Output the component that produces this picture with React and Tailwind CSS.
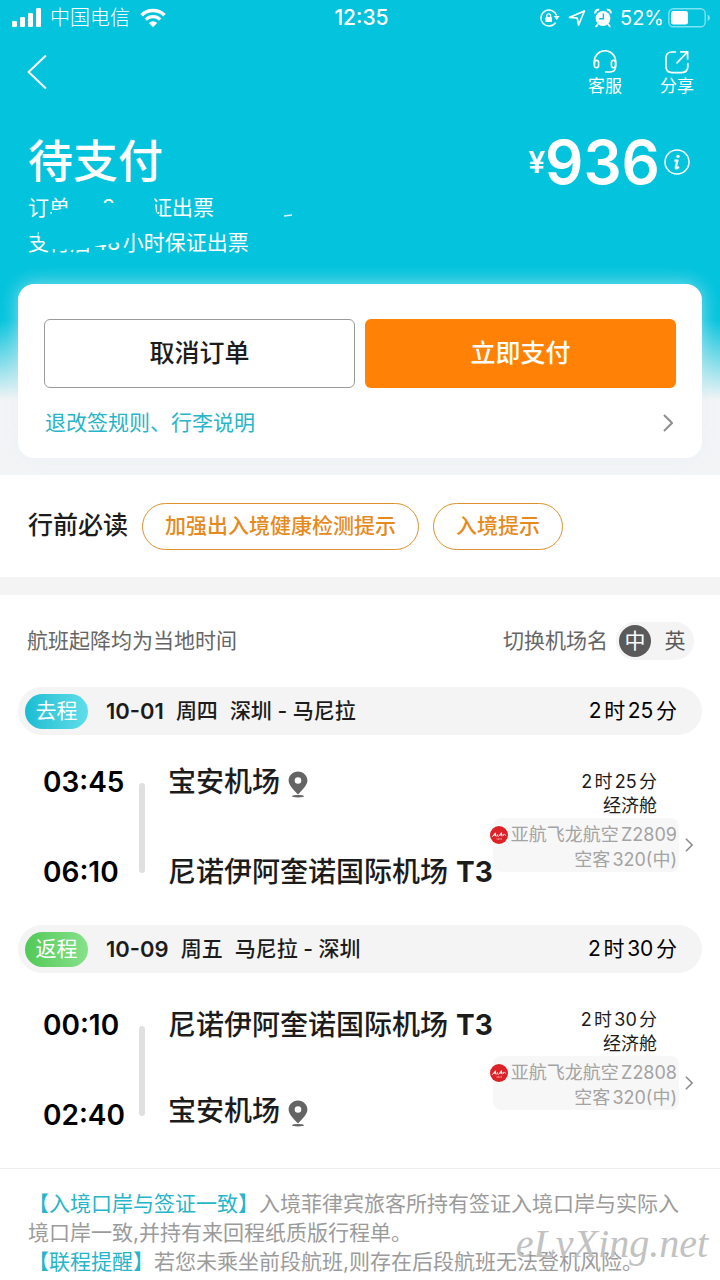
import React, { useState } from 'react';

const NOTICES = [
    {
        label: '【入境口岸与签证一致】',
        text: '入境菲律宾旅客所持有签证入境口岸与实际入境口岸一致,并持有来回程纸质版行程单。',
    },
    {
        label: '【联程提醒】',
        text: '若您未乘坐前段航班,则存在后段航班无法登机风险。',
    },
];

const LEGS = [
    {
        tag: '去程',
        tagClass: 'bg-linear-to-r from-[#14bdd2] to-[#5edde9]',
        date: '10-01',
        day: '周四',
        route: '深圳 - 马尼拉',
        duration: '2时25分',
        departTime: '03:45',
        arriveTime: '06:10',
        from: { name: '宝安机场', pin: true },
        to: { name: '尼诺伊阿奎诺国际机场', terminal: 'T3' },
        flight: 'Z2809',
        bodyClass: 'pt-[31px]',
        stopsClass: 'gap-[58px]',
    },
    {
        tag: '返程',
        tagClass: 'bg-linear-to-r from-[#52c956] to-[#86e18b]',
        date: '10-09',
        day: '周五',
        route: '马尼拉 - 深圳',
        duration: '2时30分',
        departTime: '00:10',
        arriveTime: '02:40',
        from: { name: '尼诺伊阿奎诺国际机场', terminal: 'T3' },
        to: { name: '宝安机场', pin: true },
        flight: 'Z2808',
        bodyClass: 'pt-[36px]',
        stopsClass: 'gap-[54px]',
    },
];

const SignalIcon = () => (
    <svg width="30" height="20" viewBox="0 0 30 20" fill="currentColor">
        <rect x="0" y="13" width="5" height="6" rx="1.2" />
        <rect x="8" y="9" width="5" height="10" rx="1.2" />
        <rect x="16" y="5" width="5" height="14" rx="1.2" />
        <rect x="24" y="0" width="5" height="19" rx="1.2" />
    </svg>
);

const WifiIcon = () => (
    <svg width="26" height="20" viewBox="0 0 26 20" fill="none" stroke="currentColor">
        <path d="M1.5 7.2 A16.5 16.5 0 0 1 24.5 7.2" strokeWidth="3.6" />
        <path d="M5.8 11.6 A10.3 10.3 0 0 1 20.2 11.6" strokeWidth="3.2" />
        <path d="M13 19.2 L8.8 14.9 A6 6 0 0 1 17.2 14.9 Z" fill="currentColor" stroke="none" />
    </svg>
);

const RotationLockIcon = () => (
    <svg width="20" height="20" viewBox="0 0 20 20" fill="none" stroke="currentColor">
        <path d="M15.6 14.6 A8 8 0 1 1 16.6 7.6" strokeWidth="1.5" />
        <path d="M13.8 8 H19.6 L16.7 12 Z" fill="currentColor" stroke="none" />
        <rect x="5.4" y="9" width="6.6" height="5" rx="0.8" fill="currentColor" stroke="none" />
        <path d="M6.8 9.4 V7.8 A1.9 1.9 0 0 1 10.6 7.8 V9.4" strokeWidth="1.3" />
    </svg>
);

const LocationIcon = () => (
    <svg width="18" height="18" viewBox="0 0 18 18" fill="none" stroke="currentColor" strokeWidth="1.7" strokeLinejoin="round">
        <path d="M16.4 2 L10.6 16 L9.2 9 L1.6 8.4 Z" />
    </svg>
);

const AlarmIcon = () => (
    <svg width="18" height="20" viewBox="0 0 18 20" fill="none" stroke="currentColor">
        <circle cx="9" cy="10.5" r="7.4" fill="currentColor" stroke="none" />
        <path d="M1.4 5.4 A3 3 0 0 1 5.2 1.8 M12.8 1.8 A3 3 0 0 1 16.6 5.4" strokeWidth="2" />
        <path d="M3.8 16.2 L2.2 18.4 M14.2 16.2 L15.8 18.4" strokeWidth="1.8" strokeLinecap="round" />
        <path d="M9.4 5.6 V10.8 H5.2" stroke="#03c3dd" strokeWidth="1.4" />
    </svg>
);

const BatteryIcon = () => (
    <svg width="43" height="20" viewBox="0 0 43 20" fill="none">
        <rect x="0.8" y="0.8" width="36.4" height="18" rx="4.6" stroke="#7fe3f2" strokeWidth="1.4" />
        <rect x="3" y="3" width="17" height="13.6" rx="2.4" fill="#fff" />
        <path d="M39.6 6.4 Q42 7.6 42 9.8 Q42 12 39.6 13.2 Z" fill="#7fe3f2" />
    </svg>
);

const HeadsetIcon = () => (
    <svg width="24" height="24" viewBox="0 0 24 24" fill="none" stroke="currentColor" strokeWidth="1.6" strokeLinecap="round">
        <path d="M1.4 14.6 V11.2 A10.6 10.4 0 0 1 22.6 11.2 V16.6 Q22.6 22 17 22 H12.6" />
        <path d="M1.4 12.4 Q1.4 10.4 3.4 10.4 Q5.6 10.4 5.6 12.6 V15.6 Q5.6 17.8 3.5 17.8 Q1.4 17.8 1.4 15.6 Z" />
        <path d="M22.6 12.4 Q22.6 10.4 20.6 10.4 Q18.4 10.4 18.4 12.6 V15.6 Q18.4 17.8 20.5 17.8 Q22.6 17.8 22.6 15.6 Z" />
    </svg>
);

const ShareIcon = () => (
    <svg width="24" height="24" viewBox="0 0 24 24" fill="none" stroke="currentColor" strokeWidth="1.7" strokeLinecap="round">
        <path d="M10.4 2 H7 Q1 2 1 8 V16.6 Q1 22.6 7 22.6 H16.6 Q22.8 22.6 22.8 16.6 V13.6" />
        <path d="M12 12.8 L22 2.4 M15.8 1.8 H22.6 V9" />
    </svg>
);

const PinIcon = () => (
    <svg width="20" height="27" viewBox="0 0 20 27" className="mt-1">
        <path
            fillRule="evenodd"
            d="M10 0.5 C15.2 0.5 19.4 4.6 19.4 9.6 C19.4 14.6 14.4 18.8 10 23.6 C5.6 18.8 0.6 14.6 0.6 9.6 C0.6 4.6 4.8 0.5 10 0.5 Z M10 6.2 A3.3 3.3 0 1 0 10 12.8 A3.3 3.3 0 1 0 10 6.2 Z"
            fill="#646464"
        />
        <ellipse cx="10" cy="25.2" rx="6" ry="1.2" fill="#646464" />
    </svg>
);

const AirlineLogo = () => (
    <svg width="18" height="18" viewBox="0 0 18 18" className="-ml-[3px] shrink-0">
        <circle cx="9" cy="9" r="9" fill="#dc2127" />
        <path
            d="M2.4 10.4 Q4.4 9.4 5.4 6.8 Q5.2 9.4 5.8 10.2 M3.8 9.2 H5.8 M7.4 8.6 L7.2 10 M8.6 10.2 Q10.4 9 11.4 6.6 Q11.2 9.2 11.8 10 M9.8 9 H12 M13.2 8.4 L13.4 9.6 M14.6 8.2 L15.6 9.4"
            fill="none"
            stroke="#fff"
            strokeWidth="0.9"
            strokeLinecap="round"
        />
        <path d="M6.6 13 H12.2" stroke="#fff" strokeWidth="0.8" strokeDasharray="1 0.4" />
    </svg>
);

const Chevron = ({ className, width, height, strokeWidth }) => (
    <svg width={width} height={height} viewBox="0 0 10 18" fill="none" stroke="currentColor" strokeWidth={strokeWidth} className={className}>
        <path d="M1 1 L9 9 L1 17" />
    </svg>
);

const StatusBar = () => (
    <div className="grid grid-cols-3 items-center h-9 pl-3 pr-[9px] text-xl">
        <div className="flex items-center">
            <SignalIcon />
            <span className="ml-2 font-light">中国电信</span>
            <span className="ml-2.5">
                <WifiIcon />
            </span>
        </div>
        <div className="text-center text-[21px] font-medium">12:35</div>
        <div className="flex items-center justify-end">
            <RotationLockIcon />
            <span className="ml-2">
                <LocationIcon />
            </span>
            <span className="ml-2">
                <AlarmIcon />
            </span>
            <span className="ml-2">52%</span>
            <span className="ml-1">
                <BatteryIcon />
            </span>
        </div>
    </div>
);

const Airport = ({ name, terminal, pin }) => (
    <div className="flex items-center h-8 gap-2 text-[28px] font-medium whitespace-nowrap text-[#1c1c1c]">
        {name}
        {terminal && <span className="font-bold">{terminal}</span>}
        {pin && <PinIcon />}
    </div>
);

const Leg = ({ leg }) => (
    <section>
        <div className="mx-[18px] flex items-center h-12 pl-[7px] pr-[25px] rounded-full bg-[#f4f4f4] text-[21px] text-[#1c1c1c]">
            <span className={`flex items-center justify-center w-[63px] h-[35px] rounded-full text-white ${leg.tagClass}`}>
                {leg.tag}
            </span>
            <span className="ml-[18px] text-[22px] font-semibold">{leg.date}</span>
            <span className="ml-3 font-medium">{leg.day}</span>
            <span className="ml-3 font-medium">{leg.route}</span>
            <span className="ml-auto text-black">{leg.duration}</span>
        </div>

        <div className="flex items-start justify-between pl-[43px] pr-[27px]">
            <div className={`flex pb-[37px] ${leg.bodyClass}`}>
                <div className="flex flex-col gap-[58px] w-24 text-[28px] leading-8 font-semibold text-black">
                    <time>{leg.departTime}</time>
                    <time>{leg.arriveTime}</time>
                </div>
                <div className="w-1.5 h-[90px] mt-[17px] mr-[23px] rounded-full bg-[#e0e0e0]" />
                <div className={`flex flex-col ${leg.stopsClass}`}>
                    <Airport {...leg.from} />
                    <Airport {...leg.to} />
                </div>
            </div>

            <div className="flex flex-col items-end shrink-0 pt-[35px] text-lg leading-6 text-[#1c1c1c]">
                <div className="pr-9">{leg.duration}</div>
                <div className="pr-9">经济舱</div>
                <button type="button" className="flex items-center gap-1.5 text-[#a3a3a3]">
                    <span className="flex flex-col items-end pr-0.5 pt-1 rounded-lg bg-[#f7f7f7] leading-[25px] whitespace-nowrap">
                        <span className="flex items-center gap-[3px]">
                            <AirlineLogo />
                            <span>亚航飞龙航空{leg.flight}</span>
                        </span>
                        <span>空客320(中)</span>
                    </span>
                    <Chevron width="8" height="14" strokeWidth="2" className="text-[#8c8c8c]" />
                </button>
            </div>
        </div>
    </section>
);

const App = () => {
    const [lang, setLang] = useState('zh');

    const langClass = (value) =>
        lang === value
            ? 'flex items-center justify-center size-8 rounded-full bg-[#5a5a5a] text-white'
            : 'flex items-center justify-center size-8 rounded-full text-[#5a5a5a]';

    return (
        <div className="min-h-screen bg-white font-['Inter','Noto_Sans_CJK_SC',sans-serif] [text-autospace:normal]">
            {/* Header */}
            <header className="bg-[linear-gradient(to_bottom,#03c3dd_320px,#f3f4f6_400px)] pb-[17px] text-white">
                <StatusBar />

                <nav className="flex items-start justify-between pt-3.5 pl-[27px] pr-[26px]">
                    <button type="button" aria-label="返回" className="pt-1">
                        <svg width="20" height="36" viewBox="0 0 20 36" fill="none" stroke="currentColor" strokeWidth="2" strokeLinecap="round" strokeLinejoin="round">
                            <path d="M18.4 2 L1.6 18 L18.4 34" />
                        </svg>
                    </button>
                    <div className="flex gap-[38px] text-[17px] leading-6">
                        <button type="button" className="flex flex-col items-center">
                            <HeadsetIcon />
                            客服
                        </button>
                        <button type="button" className="flex flex-col items-center">
                            <ShareIcon />
                            分享
                        </button>
                    </div>
                </nav>

                <div className="flex items-center justify-between h-14 mt-9 pl-7 pr-[30px]">
                    <h1 className="text-[45px] font-medium">待支付</h1>
                    <div className="flex items-center">
                        <div className="flex items-center font-semibold">
                            <span className="text-3xl">¥</span>
                            <span className="text-6xl">936</span>
                        </div>
                        <button type="button" aria-label="价格说明" className="ml-1">
                            <svg width="26" height="26" viewBox="0 0 26 26" fill="none" stroke="currentColor">
                                <circle cx="13" cy="13" r="12" strokeWidth="1.5" />
                                <circle cx="14" cy="7.4" r="1.7" fill="currentColor" stroke="none" />
                                <path d="M10.4 11.6 H13.4 L11.8 18.4 Q11.6 20 13.2 19.2 L15 18" strokeWidth="2.2" strokeLinejoin="round" />
                            </svg>
                        </button>
                    </div>
                </div>

                {/* Order hints, partly wiped out */}
                <div className="relative mx-7 text-[21px] leading-[35px]">
                    <p className="flex">
                        <span>订单</span>
                        <span className="ml-8">8</span>
                        <span className="ml-9">证出票</span>
                    </p>
                    <p>支付后48小时保证出票</p>
                    <svg width="280" height="70" viewBox="0 0 280 70" fill="#03c3dd" className="absolute left-0 top-0">
                        <path d="M24 21 L38 18 L44 20 L46 6 H70 V13 H92 L96 6 H126 L128 22 L134 28 V36 L112 42 L96 44 L92 52 L64 57 L50 60 L22 59 L15 50 L10 45 L14 36 L24 32 Z" />
                        <path d="M256 26 L264 25" fill="none" stroke="#d9f6fb" strokeWidth="1.4" />
                    </svg>
                </div>

                {/* Action card */}
                <div className="mx-[18px] mt-6 px-[26px] pt-[35px] rounded-2xl bg-white shadow-[0_0_20px_rgba(232,240,244,0.6)]">
                    <div className="grid grid-cols-2 gap-2.5 text-[25px] font-medium">
                        <button type="button" className="h-[69px] rounded-md border border-[#9a9a9a] text-[#1c1c1c]">
                            取消订单
                        </button>
                        <button type="button" className="h-[69px] rounded-md bg-[#ff8206] text-white">
                            立即支付
                        </button>
                    </div>
                    <a href="#rules" className="flex items-center justify-between h-[70px] pl-px pr-[3px] text-[21px] text-[#27b5c9]">
                        退改签规则、行李说明
                        <Chevron width="10" height="18" strokeWidth="2" className="text-[#8f8f8f]" />
                    </a>
                </div>
            </header>

            {/* Must-read tips */}
            <section className="flex items-center h-[102px] px-7">
                <h2 className="text-[25px] font-medium text-[#1c1c1c]">行前必读</h2>
                <div className="flex gap-3.5 ml-3.5 text-[21px] font-medium text-[#e68a1e]">
                    <button type="button" className="h-[47px] px-[22px] rounded-full border border-[#e0902f]">
                        加强出入境健康检测提示
                    </button>
                    <button type="button" className="h-[47px] px-[22px] rounded-full border border-[#e0902f]">
                        入境提示
                    </button>
                </div>
            </section>

            <div className="h-[18px] bg-[#f4f4f4]" />

            {/* Flights */}
            <div className="flex items-center justify-between h-[92px] pl-[27px] pr-[26px] text-[21px] text-[#666666]">
                <p>航班起降均为当地时间</p>
                <div className="flex items-center gap-2">
                    切换机场名
                    <div className="flex items-center gap-2 h-[38px] px-[3px] rounded-full bg-[#f4f4f4]">
                        <button type="button" className={langClass('zh')} onClick={() => setLang('zh')}>
                            中
                        </button>
                        <button type="button" className={langClass('en')} onClick={() => setLang('en')}>
                            英
                        </button>
                    </div>
                </div>
            </div>

            {LEGS.map((leg) => (
                <Leg key={leg.flight} leg={leg} />
            ))}

            {/* Notices */}
            <footer className="relative px-7 pt-5 border-t border-[#eeeeee] text-[21px] leading-[29px] text-[#9b9b9b]">
                {NOTICES.map((notice) => (
                    <p key={notice.label}>
                        <span className="text-[#27b5c9]">{notice.label}</span>
                        {notice.text}
                    </p>
                ))}
                <span className="absolute right-3 bottom-3 font-['Liberation_Serif',serif] italic text-[40px] leading-10 text-[#c2c2c2]">
                    eLvXing.net
                </span>
            </footer>
        </div>
    );
};

export default App;
